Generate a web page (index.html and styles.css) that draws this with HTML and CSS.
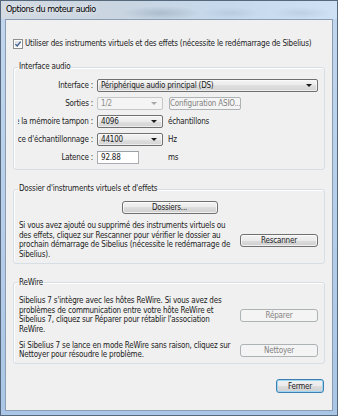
FILE: index.html
```html
<!DOCTYPE html>
<html lang="fr">
<head>
    <meta charset="UTF-8">
    <meta name="viewport" content="width=device-width, initial-scale=1.0">
    <title>Options du moteur audio</title>
    <link rel="stylesheet" href="styles.css">
</head>
<body>
    <div class="window">
        <div class="titlebar">
            <span class="title">Options du moteur audio</span>
        </div>
        <div class="client">
            <label class="check-row">
                <span class="checkbox">
                    <svg width="10" height="10" viewBox="0 0 10 10">
                        <defs>
                            <linearGradient id="cbFill" x1="0" y1="0" x2="1" y2="1">
                                <stop offset="0" stop-color="#d9dbde"/>
                                <stop offset="1" stop-color="#fbfbfb"/>
                            </linearGradient>
                        </defs>
                        <rect x="0.5" y="0.5" width="9" height="9" fill="#fff" stroke="#8e8f8f"/>
                        <rect x="2" y="2" width="6" height="6" fill="url(#cbFill)"/>
                        <path d="M2.4 5.1 L4.2 7 L7.6 2.6" fill="none" stroke="#3c5b8e" stroke-width="1.3"/>
                    </svg>
                </span>
                Utiliser des instruments virtuels et des effets (nécessite le redémarrage de Sibelius)
            </label>

            <fieldset class="group group-interface">
                <legend>Interface audio</legend>
                <div class="field-row">
                    <span class="field-label"><span>Interface :</span></span>
                    <div class="combo combo-wide"><span>Périphérique audio principal (DS)</span><i class="arrow"></i></div>
                </div>
                <div class="field-row">
                    <span class="field-label"><span>Sorties :</span></span>
                    <div class="slot"><div class="combo disabled"><span>1/2</span><i class="arrow"></i></div></div>
                    <button class="btn btn-asio" disabled>Configuration ASIO...</button>
                </div>
                <div class="field-row">
                    <span class="field-label"><span>Taille de la mémoire tampon :</span></span>
                    <div class="slot"><div class="combo"><span>4096</span><i class="arrow"></i></div></div>
                    <span class="unit">échantillons</span>
                </div>
                <div class="field-row">
                    <span class="field-label"><span>Fréquence d'échantillonnage :</span></span>
                    <div class="slot"><div class="combo"><span>44100</span><i class="arrow"></i></div></div>
                    <span class="unit">Hz</span>
                </div>
                <div class="field-row">
                    <span class="field-label"><span>Latence :</span></span>
                    <div class="slot"><div class="textbox">92.88</div></div>
                    <span class="unit">ms</span>
                </div>
            </fieldset>

            <fieldset class="group group-folder">
                <legend>Dossier d'instruments virtuels et d'effets</legend>
                <div class="center-row">
                    <button class="btn btn-folders">Dossiers...</button>
                </div>
                <div class="action-row">
                    <p class="note">Si vous avez ajouté ou supprimé des instruments virtuels ou<br>des effets, cliquez sur Rescanner pour vérifier le dossier au<br>prochain démarrage de Sibelius (nécessite le redémarrage de<br>Sibelius).</p>
                    <button class="btn btn-side">Rescanner</button>
                </div>
            </fieldset>

            <fieldset class="group group-rewire">
                <legend>ReWire</legend>
                <div class="action-row">
                    <p class="note">Sibelius 7 s'intègre avec les hôtes ReWire. Si vous avez des<br>problèmes de communication entre votre hôte ReWire et<br>Sibelius 7, cliquez sur Réparer pour rétablir l'association<br>ReWire.</p>
                    <button class="btn btn-side" disabled>Réparer</button>
                </div>
                <div class="action-row second">
                    <p class="note">Si Sibelius 7 se lance en mode ReWire sans raison, cliquez sur<br>Nettoyer pour résoudre le problème.</p>
                    <button class="btn btn-side" disabled>Nettoyer</button>
                </div>
            </fieldset>

            <div class="footer">
                <button class="btn btn-default">Fermer</button>
            </div>
        </div>
    </div>
</body>
</html>
```

FILE: styles.css
```css
body {
    margin: 0;
    font-family: "Liberation Sans Narrow", "DejaVu Sans Condensed", "Liberation Sans", sans-serif;
    font-size: 8px;
    letter-spacing: -0.2px;
    color: #1b1b1b;
}
.window {
    width: 338px;
    height: 416px;
    box-sizing: border-box;
    display: flex;
    flex-direction: column;
    padding: 0 4px 4px 4px;
    background: linear-gradient(#c2d7ee, #aac6e6);
    border-left: 1px solid #56687c;
    border-right: 1px solid #56687c;
    border-bottom: 1px solid #56687c;
}
.titlebar {
    height: 19px;
    flex: none;
    margin: 0 -4px;
    padding-left: 5px;
    box-sizing: border-box;
    background:
        radial-gradient(ellipse 40px 7px at 160px 12px, rgba(120, 140, 160, 0.35), transparent),
        radial-gradient(ellipse 30px 6px at 230px 12px, rgba(150, 170, 195, 0.3), transparent),
        radial-gradient(ellipse 30px 6px at 300px 12px, rgba(150, 170, 195, 0.3), transparent),
        linear-gradient(90deg, #d3dae2 0%, #c9d5e1 35%, #c6d9ec 65%, #cfe2f5 100%);
    border-top: 1px solid #56687c;
}
.title {
    display: block;
    font-size: 9px;
    letter-spacing: -0.5px;
    line-height: 16px;
    color: #000;
    text-shadow: 0 0 4px rgba(255, 255, 255, 0.9);
}
.client {
    flex: 1;
    background: #f0f0f0;
    border: 1px solid #8a9db3;
    padding: 0 7px;
}
.check-row {
    display: flex;
    align-items: center;
    gap: 2px;
    height: 10px;
    line-height: 10px;
    margin-top: 19px;
    white-space: nowrap;
}
.checkbox {
    width: 10px;
    height: 10px;
    display: block;
}
.checkbox svg {
    display: block;
}
.group {
    margin: 13px 0 0;
    padding: 7px 5px 5px 4px;
    border: 1px solid #d5dfe5;
    border-radius: 3px;
    box-shadow: inset 1px 1px 0 #fff;
    min-width: 0;
}
.group legend {
    padding: 0 1px;
    line-height: 10px;
}
.group-interface {
    display: flex;
    flex-direction: column;
    gap: 5px;
}
.group-folder,
.group-rewire {
    margin-top: 14px;
}
.group-folder {
    padding-bottom: 3px;
}
.group-rewire {
    padding-top: 8px;
    padding-bottom: 3px;
}
.field-row {
    display: flex;
    align-items: center;
    height: 13px;
}
.field-label {
    width: 76px;
    margin-right: 3px;
    overflow: hidden;
    display: flex;
    justify-content: flex-end;
    white-space: nowrap;
    flex: none;
}
.field-label span {
    padding-right: 1px;
}
.slot {
    width: 66px;
    flex: none;
}
.combo {
    height: 13px;
    box-sizing: border-box;
    display: flex;
    align-items: center;
    justify-content: space-between;
    padding: 0 5px 0 3px;
    border: 1px solid #707070;
    border-radius: 2px;
    background: linear-gradient(#f4f4f4 0%, #ebebeb 50%, #dfdfdf 50%, #d4d4d4 100%);
    box-shadow: inset 0 0 0 1px rgba(255, 255, 255, 0.6);
    line-height: 11px;
}
.combo-wide {
    width: 221px;
}
.combo .arrow {
    width: 0;
    height: 0;
    border-left: 3px solid transparent;
    border-right: 3px solid transparent;
    border-top: 3px solid #1b1b1b;
}
.combo.disabled {
    border-color: #c4c7c9;
    background: #f4f4f4;
    box-shadow: none;
    color: #8c8c8c;
}
.combo.disabled .arrow {
    border-top-color: #a8a8a8;
}
.textbox {
    width: 42px;
    height: 13px;
    box-sizing: border-box;
    padding: 0 3px;
    line-height: 11px;
    background: #fff;
    border: 1px solid #abadb3;
    border-top-color: #9ba0a6;
}
.unit {
    margin-left: 5px;
}
.btn {
    font-family: inherit;
    font-size: 8px;
    letter-spacing: inherit;
    color: #1b1b1b;
    height: 13px;
    padding: 0;
    line-height: 11px;
    white-space: nowrap;
    border: 1px solid #707070;
    border-radius: 3px;
    background: linear-gradient(#f2f2f2 0%, #ebebeb 50%, #dddddd 50%, #cfcfcf 100%);
    box-shadow: inset 0 0 0 1px rgba(255, 255, 255, 0.7);
    cursor: pointer;
}
.btn:disabled {
    border-color: #adb2b5;
    background: #f4f4f4;
    box-shadow: none;
    color: #838383;
}
.btn-asio {
    width: 72px;
    margin-left: 6px;
    border-radius: 2px;
    overflow: hidden;
}
.center-row {
    display: flex;
    justify-content: center;
    padding-left: 2px;
}
.btn-folders {
    width: 96px;
}
.action-row {
    display: flex;
    align-items: center;
    justify-content: space-between;
    margin-top: 7px;
}
.group-rewire .action-row {
    margin-top: 0;
}
.group-rewire .action-row.second {
    margin-top: 6px;
}
.note {
    margin: 0;
    padding-left: 1px;
    line-height: 9.7px;
    white-space: nowrap;
}
.btn-side {
    width: 78px;
    margin-right: 1px;
}
.footer {
    display: flex;
    justify-content: flex-end;
    margin-top: 15px;
}
.btn-default {
    width: 48px;
    height: 14px;
    margin-right: 1px;
    border-color: #3c7fb1;
    box-shadow: inset 0 0 0 1px #9fd5f5;
}
```
